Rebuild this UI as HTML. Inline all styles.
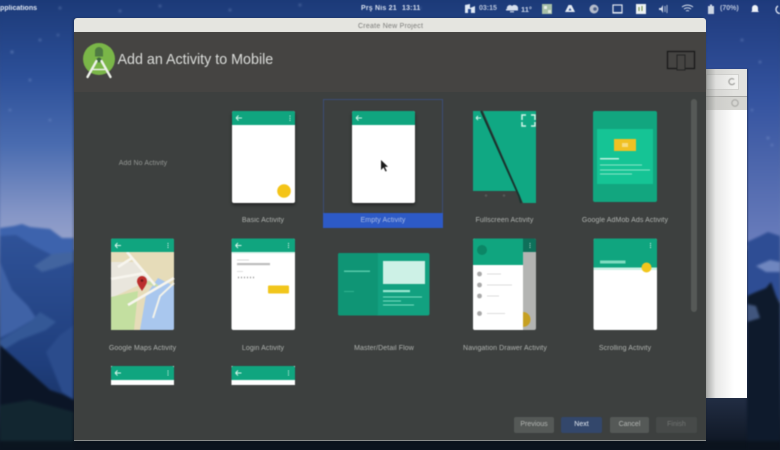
<!DOCTYPE html>
<html><head><meta charset="utf-8">
<style>
html,body{margin:0;padding:0;background:#0c1420}
#p{position:relative;width:780px;height:450px;overflow:hidden;font-family:"Liberation Sans",sans-serif;background:linear-gradient(180deg,#1c3a78 0,#6a80b8 50%,#0c1420 100%)}
.a{position:absolute}
.t{position:absolute;white-space:nowrap;filter:blur(.4px)}
.card{position:absolute;width:63px;height:92px;background:#fff;border-radius:2px;box-shadow:0 2px 3px rgba(0,0,0,.45);overflow:hidden}
.hd{position:absolute;left:0;top:0;width:100%;height:14px;background:#10a57f}
.lb{position:absolute;font-size:7px;color:#b0b3b0;white-space:nowrap;transform:translateX(-50%);letter-spacing:.1px;filter:blur(.3px)}
.btn{position:absolute;top:417px;height:16px;border-radius:2px;font-size:7px;line-height:16px;text-align:center;color:#b4b7b4;background:#555957}
svg{position:absolute;left:0;top:0}
</style></head><body><div id="p">
<svg width="780" height="450" viewBox="0 0 780 450" style="filter:blur(1.2px)">
<defs><linearGradient id="sky" x1="0" y1="0" x2="0" y2="1">
<stop offset="0" stop-color="#1c3a78"/><stop offset=".3" stop-color="#2c4f98"/><stop offset=".58" stop-color="#4a6cb0"/><stop offset=".85" stop-color="#8495c6"/><stop offset="1" stop-color="#9aa5cc"/></linearGradient>
<linearGradient id="skyR" x1="0" y1="0" x2="0" y2="1">
<stop offset="0" stop-color="#1e3a7c"/><stop offset=".4" stop-color="#34539f"/><stop offset="1" stop-color="#6a7dbc"/></linearGradient>
<linearGradient id="mt" x1="0" y1="0" x2="0" y2="1">
<stop offset="0" stop-color="#2f5298"/><stop offset=".6" stop-color="#1f3e7c"/><stop offset="1" stop-color="#142a52"/></linearGradient></defs>
<rect width="780" height="250" fill="url(#sky)"/>
<rect x="706" width="74" height="245" fill="url(#skyR)"/>
<path d="M0 228L14 226 22 224 30 227 50 229 62 238 74 238V450H0Z" fill="#3d63ad"/>
<path d="M0 236L16 235 34 246 50 254 74 262V450H0Z" fill="url(#mt)"/>
<path d="M0 262L12 290 28 306 36 318 12 332 0 338Z" fill="#3f62a6"/>
<path d="M34 266L52 254 74 252V262L56 268 42 272Z" fill="#42649f"/>
<path d="M0 340L30 322 40 312 56 322 46 330 20 340 0 352Z" fill="#345896"/>
<path d="M46 352L60 335 74 325V400L62 392Z" fill="#2b4c8c"/>
<path d="M0 345L50 390 62 394 74 400V450H0Z" fill="#0b1526"/>
<path d="M0 405L30 400 74 412V450H0Z" fill="#122630"/>
<path d="M747 242L760 236 768 232 780 236V300H747Z" fill="#2e4d94"/>
<path d="M756 266L770 260 780 262V272L766 272Z" fill="#6f86bf"/>
<path d="M747 296L756 292 766 288 771 282 776 296 780 304V450H747Z" fill="#0e1a2c"/>
<path d="M747 304L756 306 760 318 747 322Z" fill="#41567e"/>
<path d="M0 441H780V450H0Z" fill="#0b131c" opacity=".85"/>
<g fill="#a8c0ea" opacity=".8">
<circle cx="760" cy="62" r=".9"/><circle cx="768" cy="138" r=".9"/><circle cx="772" cy="145" r=".8"/><circle cx="752" cy="110" r=".8"/><circle cx="12" cy="52" r="1"/><circle cx="40" cy="40" r=".9"/><circle cx="58" cy="35" r=".8"/><circle cx="30" cy="80" r=".9"/><circle cx="10" cy="110" r=".8"/><circle cx="50" cy="120" r=".8"/><circle cx="160" cy="6" r=".9"/><circle cx="230" cy="10" r=".9"/><circle cx="300" cy="5" r=".9"/><circle cx="120" cy="11" r=".9"/><circle cx="420" cy="8" r=".8"/><circle cx="742" cy="40" r=".9"/><circle cx="60" cy="8" r=".9"/>
</g>
</svg>

<!-- top panel -->
<div class="t" style="left:-5px;top:5px;font-size:7px;font-weight:bold;color:#dfe6f2">Applications</div>
<div class="t" style="left:361px;top:4.500px;font-size:7px;font-weight:bold;color:#d6dfee;letter-spacing:.2px">Prş Nis 21</div>
<div class="t" style="left:402px;top:4.500px;font-size:7px;font-weight:bold;color:#d6dfee;letter-spacing:.2px">13:11</div>
<div class="t" style="left:479px;top:4.500px;font-size:7px;font-weight:bold;color:#b9c5dc">03:15</div>
<div class="t" style="left:521px;top:4.500px;font-size:7.500px;font-weight:bold;color:#c9d4e8">11°</div>
<div class="t" style="left:720px;top:4.500px;font-size:7px;font-weight:bold;color:#b9c5dc">(70%)</div>
<svg width="780" height="18" viewBox="0 0 780 18" style="filter:blur(.4px)">
<path d="M465 5L470 4V8L475 6V13H465Z" fill="#dfe8f4"/><path d="M468 9h3v4h-3z" fill="#24478c"/>
<path d="M507 9a3 3 0 0 1 5-3 3.500 3.500 0 0 1 6 3Z" fill="#d5deec"/><rect x="506" y="9" width="12" height="1.500" fill="#d5deec"/><rect x="510" y="11" width="4" height="1.500" fill="#a9b8d2"/>
<rect x="542" y="4" width="10" height="10" fill="#a8c0a8"/><rect x="544" y="6" width="3" height="3" fill="#e8efe8"/><rect x="548" y="10" width="3" height="3" fill="#dde6dd"/>
<path d="M565 12L568.500 5 571.500 5 575 12Z" fill="#e4eaf2"/><path d="M568.500 10.500l1.500-2.500 1.500 2.500Z" fill="#24478c"/>
<circle cx="594" cy="9" r="4.500" fill="#b5bccb"/><circle cx="595" cy="9" r="1.800" fill="#4c5f88"/>
<rect x="613" y="5" width="9" height="8" fill="none" stroke="#e0e6f0" stroke-width="1.200"/><rect x="613" y="12" width="9" height="1.500" fill="#e0e6f0"/>
<rect x="636" y="4" width="10" height="10" fill="#eef2f4"/><path d="M639 7v4M642 6v5" stroke="#6a8a3a" stroke-width="1"/>
<path d="M659 8h2l2-3v8l-2-3h-2Z" fill="#d6deec"/><path d="M665 6v6M667 5v8" stroke="#b9c5db" stroke-width=".9"/>
<path d="M682 7a9 9 0 0 1 11 0M684 9a6 6 0 0 1 7 0M686 11a3 3 0 0 1 3 0" stroke="#dfe6f2" stroke-width=".9" fill="none"/>
<rect x="708" y="6" width="6" height="8" fill="#cdd6e4"/><rect x="710" y="4.500" width="2" height="1.500" fill="#cdd6e4"/>
<path d="M752 11V8a3 3 0 0 1 6 0v3l1 1h-8Z" fill="#eef2f8"/>
<path d="M778 6a4 4 0 1 0 4 0" stroke="#dfe6f2" stroke-width="1.300" fill="none"/>
</svg>

<!-- background browser window -->
<div class="a" style="left:700px;top:69px;width:47px;height:329px;background:#fff;box-shadow:1px 0 1px rgba(20,30,60,.5)"></div>
<div class="a" style="left:706px;top:69px;width:41px;height:27px;background:#e2e2df"></div>
<div class="a" style="left:706px;top:74px;width:33px;height:16px;background:#f1f1ef;border:1px solid #d2d2cf;box-sizing:border-box"></div>
<div class="a" style="left:706px;top:96px;width:41px;height:14px;background:#d6d6d2;border-top:1px solid #a9a9a6;box-sizing:border-box"></div>
<div class="a" style="left:706px;top:69px;width:28px;height:329px;background:linear-gradient(90deg,rgba(120,122,120,.65) 0,rgba(190,190,188,.35) 35%,rgba(255,255,255,0) 100%)"></div>
<svg width="780" height="120" viewBox="0 0 780 120" style="z-index:1;filter:blur(.4px)">
<path d="M734 79.500a3 3 0 1 0 .6 3.500" fill="none" stroke="#8d8d8a" stroke-width="1"/>
<circle cx="735" cy="103" r="3.200" fill="none" stroke="#a5a5a2" stroke-width="1"/>
</svg>

<!-- dialog -->
<div class="a" style="left:74px;top:18px;width:632px;height:423px;background:#3d403f;border-radius:3px 3px 0 0;border-bottom:1px solid #8a8d8b;box-sizing:border-box;box-shadow:-1px 0 2px rgba(0,0,0,.3);z-index:2">
<div class="a" style="left:0;top:0;width:632px;height:14px;background:#e5e5e0;border-radius:3px 3px 0 0"></div>
<div class="a" style="left:0;top:14px;width:632px;height:60px;background:#454442"></div>
<div class="t" style="left:284px;top:4.500px;font-size:7px;color:#7b7b78;letter-spacing:.25px">Create New Project</div>
<div class="t" style="left:43.500px;top:34px;font-size:14.300px;color:#dcdedb">Add an Activity to Mobile</div>
</div>

<div id="c" class="a" style="left:0;top:0;width:780px;height:450px;z-index:3;filter:blur(.45px)">
<!-- logo -->
<svg width="130" height="90" viewBox="0 0 130 90">
<circle cx="99" cy="59" r="16" fill="#7ab648"/>
<path d="M99 47a4 4 0 0 1 4 4.500v5h-8v-5a4 4 0 0 1 4-4.500Z" fill="#4e7a42"/>
<circle cx="99" cy="60" r="2.500" fill="#3f6640"/>
<path d="M96.500 61L87.500 77M101.500 61L110.500 77" stroke="#eef2ea" stroke-width="2.400" stroke-linecap="round"/>
<path d="M93 69.500H105" stroke="#eef2ea" stroke-width="1.400"/>
</svg>
<!-- device icon -->
<svg width="780" height="80" viewBox="0 0 780 80">
<rect x="667.500" y="51.500" width="27" height="17" fill="none" stroke="#171817" stroke-width="1.200"/>
<rect x="677" y="55" width="8" height="15" fill="#454442" stroke="#232423" stroke-width="1"/>
</svg>

<!-- selection -->
<div class="a" style="left:323px;top:99px;width:120px;height:129px;border:1px solid #3c4e74;box-sizing:border-box"></div>
<div class="a" style="left:323px;top:213px;width:120px;height:14.500px;background:#2d5ac6"></div>

<!-- scrollbar -->
<div class="a" style="left:691px;top:99px;width:6px;height:213px;background:#565957;border-radius:3px"></div>

<!-- Row 1 -->
<div class="lb" style="left:143px;top:160px;color:#949794">Add No Activity</div>

<div class="card" style="left:231.500px;top:110.500px"><div class="hd"></div>
<svg width="63" height="92"><path d="M4 7h6M4 7l2.500-2.500M4 7l2.500 2.500" stroke="#cdf0e3" fill="none"/><path d="M58 4.500v1M58 6.700v1M58 8.900v1" stroke="#e2f6ee"/><circle cx="52" cy="80" r="6.800" fill="#f4c418"/></svg></div>
<div class="lb" style="left:263px;top:217px">Basic Activity</div>

<div class="card" style="left:352px;top:110.500px"><div class="hd"></div>
<svg width="63" height="92"><path d="M4 7h6M4 7l2.500-2.500M4 7l2.500 2.500" stroke="#cdf0e3" fill="none"/><path d="M29 49v10l2.500-2.500 2 4 1.300-.6-2-4 3.200-.2Z" fill="#1a1a1a"/></svg></div>
<div class="lb" style="left:383px;top:217px;color:#a9bbe6">Empty Activity</div>

<svg width="780" height="240" viewBox="0 0 780 240">
<!-- fullscreen -->
<path d="M473 111H536V203H523L483 111Z" fill="#10a883"/>
<path d="M473 111H481L517 191H473Z" fill="#10a883"/>
<path d="M481 111L519 196 521 203" stroke="#17352f" stroke-width="1.800" fill="none"/>
<path d="M476 118h5M476 118l2-2M476 118l2 2" stroke="#c7efe1" fill="none" stroke-width="1.100"/>
<path d="M522 120v-5h4M531 115h4v5M535 122v4h-4M526 126h-4v-4" stroke="#d0f4e8" stroke-width="1.500" fill="none"/>
<circle cx="486" cy="195.500" r="1.300" fill="#555856"/><circle cx="504" cy="195.500" r="1.300" fill="#555856"/>
<!-- admob -->
<rect x="593" y="111" width="64" height="91" rx="2" fill="#12a67f"/>
<rect x="597" y="129" width="56" height="55" fill="#15c495"/>
<rect x="614" y="139" width="22" height="12" fill="#f1c123"/>
<rect x="622" y="143" width="6" height="4" fill="#f7dc80"/>
<rect x="600" y="158" width="19" height="1.500" fill="#bff0e0"/>
<path d="M600 165h42M600 170h50M600 174h32" stroke="#8ae4c8" stroke-width="1"/>
</svg>
<div class="lb" style="left:504.500px;top:217px">Fullscreen Activity</div>
<div class="lb" style="left:625px;top:217px">Google AdMob Ads Activity</div>

<!-- Row 2 -->
<svg width="780" height="450" viewBox="0 0 780 450">
<!-- maps -->
<g>
<rect x="111" y="238.500" width="63" height="91.500" rx="2" fill="#e6dcb9"/>
<path d="M111 262H135L150 280 111 298Z" fill="#e9e6dd"/>
<path d="M111 297L138 291 134 330H111Z" fill="#c3dfa0"/>
<path d="M140 330L146 295 158 278 174 286V328Q174 330 172 330Z" fill="#a9c7ee"/>
<path d="M148 281L154 282 162 288 146 284Z" fill="#c9dca8"/>
<path d="M127 252L155 285M128 305L174 278M111 279L145 273M118 267L132 258" stroke="#f7f5ee" stroke-width="2.600" fill="none"/>
<path d="M153 318L160 296 174 283" stroke="#f2f2ea" stroke-width="2" fill="none"/>
<path d="M142 291C138 285 137 283 137 281a5 5 0 0 1 10 0c0 2-1 4-5 10Z" fill="#bb2e2c"/>
<circle cx="142" cy="280.500" r="1.300" fill="#6c1a18"/>
<path d="M111 240.500a2 2 0 0 1 2-2H172a2 2 0 0 1 2 2V252H111Z" fill="#10a57f"/>
<path d="M115 245.500h6M115 245.500l2.500-2.500M115 245.500l2.500 2.500" stroke="#d6f4ea" fill="none"/>
<path d="M168 243v1M168 245v1M168 247v1" stroke="#e2f6ee"/>
</g>
<!-- login -->
<g>
<rect x="231.500" y="238.500" width="63.500" height="91.500" rx="2" fill="#fff"/>
<path d="M231.500 240.500a2 2 0 0 1 2-2H293a2 2 0 0 1 2 2V252H231.500Z" fill="#10a57f"/>
<rect x="231.500" y="252" width="63.500" height="1.500" fill="#d8f3ea"/>
<path d="M235.500 245.500h6M235.500 245.500l2.500-2.500M235.500 245.500l2.500 2.500" stroke="#d6f4ea" fill="none"/>
<path d="M288.500 243v1M288.500 245v1M288.500 247v1" stroke="#e2f6ee"/>
<rect x="237" y="259.500" width="12" height="1" fill="#d8d8d8"/>
<rect x="237" y="263" width="33" height="2.200" fill="#bdbdbd"/>
<rect x="237" y="271" width="6" height="1" fill="#dedede"/>
<path d="M238 277.500h1M241 277.500h1M244 277.500h1M247 277.500h1M250 277.500h1M253 277.500h1" stroke="#8a8a8a" stroke-width="1.400"/>
<rect x="268" y="285.500" width="21" height="8" rx="1" fill="#f1c61c"/>
</g>
<!-- master detail -->
<g>
<rect x="338" y="253" width="91.500" height="62.500" rx="2" fill="#12a180"/>
<rect x="338" y="253" width="40" height="62.500" rx="2" fill="#0f9575"/>
<rect x="383" y="261" width="42" height="23" fill="#cdf1e6"/>
<rect x="344" y="270.500" width="26" height="1.500" fill="#55c9a9"/>
<rect x="344" y="291" width="10" height="1" fill="#2fb28f"/>
<rect x="383" y="290" width="27" height="2.200" fill="#9ce8d2"/>
<path d="M383 297h39M383 301h18M383 305h31" stroke="#76dcc0" stroke-width="1"/>
</g>
<!-- nav drawer -->
<g>
<rect x="473" y="238.500" width="63" height="91.500" rx="2" fill="#b3b4b2"/>
<path d="M523 238.500H534a2 2 0 0 1 2 2V252H523Z" fill="#0e705a"/>
<path d="M530 243v1M530 245v1M530 247v1" stroke="#b2e0d2"/>
<path d="M523 312a7.500 7.500 0 0 1 0 15Z" fill="#c6a022"/>
<path d="M473 240.500a2 2 0 0 1 2-2H523V330H475a2 2 0 0 1-2-2Z" fill="#fff"/>
<path d="M473 240.500a2 2 0 0 1 2-2H523V265H473Z" fill="#10a57f"/>
<circle cx="482" cy="250" r="5" fill="#0c8666"/>
<g fill="#a9a9a9"><circle cx="479.500" cy="274" r="2.400"/><circle cx="479.500" cy="285" r="2.400"/><circle cx="479.500" cy="296" r="2.400"/><circle cx="479.500" cy="313.500" r="2.400"/></g>
<path d="M487 274h14M487 285h25M487 296h12M487 313.500h18" stroke="#dcdcdc" stroke-width="1"/>
</g>
<!-- scrolling -->
<g>
<rect x="593.500" y="238.500" width="63.500" height="91.500" rx="2" fill="#fff"/>
<path d="M593.500 240.500a2 2 0 0 1 2-2H655a2 2 0 0 1 2 2V267.500H593.500Z" fill="#10a57f"/>
<rect x="593.500" y="267.500" width="63.500" height="2.500" fill="#c9f0e4"/>
<rect x="600" y="260.500" width="25.500" height="3" fill="#7fdcc0"/>
<path d="M650.500 243v1M650.500 245v1M650.500 247v1" stroke="#e2f6ee"/>
<circle cx="646.500" cy="267.500" r="5" fill="#f1c61c"/>
</g>
<!-- row 3 -->
<g>
<rect x="111" y="366" width="63" height="19" fill="#fff"/>
<path d="M111 368a2 2 0 0 1 2-2H172a2 2 0 0 1 2 2V380H111Z" fill="#10a57f"/>
<path d="M115 373h6M115 373l2.500-2.500M115 373l2.500 2.500" stroke="#d6f4ea" fill="none"/>
<path d="M168 370.500v1M168 372.500v1M168 374.500v1" stroke="#e2f6ee"/>
<rect x="231.500" y="366" width="63.500" height="19" fill="#fff"/>
<path d="M231.500 368a2 2 0 0 1 2-2H293a2 2 0 0 1 2 2V380H231.500Z" fill="#10a57f"/>
<path d="M235.500 373h6M235.500 373l2.500-2.500M235.500 373l2.500 2.500" stroke="#d6f4ea" fill="none"/>
<path d="M288.500 370.500v1M288.500 372.500v1M288.500 374.500v1" stroke="#e2f6ee"/>
</g>
</svg>
<div class="lb" style="left:142.500px;top:344.500px">Google Maps Activity</div>
<div class="lb" style="left:263px;top:344.500px">Login Activity</div>
<div class="lb" style="left:384px;top:344.500px">Master/Detail Flow</div>
<div class="lb" style="left:505px;top:344.500px">Navigation Drawer Activity</div>
<div class="lb" style="left:625px;top:344.500px">Scrolling Activity</div>

<!-- buttons -->
<div class="btn" style="left:514px;width:40px">Previous</div>
<div class="btn" style="left:561px;width:41px;background:#33476b;color:#e4eaf2">Next</div>
<div class="btn" style="left:610px;width:39px">Cancel</div>
<div class="btn" style="left:656px;width:41px;background:#474a49;color:#717472">Finish</div>
</div>
</div></body></html>
